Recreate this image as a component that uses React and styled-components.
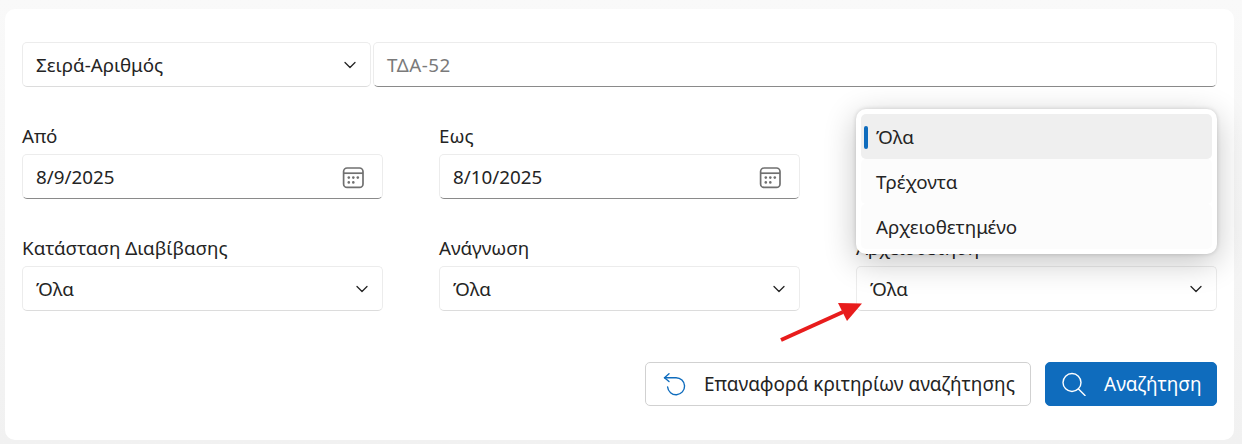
import React from "react";
import styled, { createGlobalStyle } from "styled-components";

const Global = createGlobalStyle`
  html, body { margin: 0; padding: 0; background: #f3f3f3; }
  body { font-family: "Noto Sans", "Open Sans", "Liberation Sans", sans-serif; color: #242424; }
  * { box-sizing: border-box; }
`;
const Page = styled.div`
  width: 1242px; height: 444px; padding: 9px 8px 4px 5px; overflow: hidden;
  background: linear-gradient(#f9f9f9, #f1f1f1);
`;
const Card = styled.div`
  position: relative; height: 431px; background: #fff; border-radius: 10px;
  padding: 33px 17px 0 17px;
`;
const TopRow = styled.div`display: flex; gap: 2px; height: 45px;`;
const Box = styled.div`
  display: flex; align-items: center; justify-content: space-between;
  width: ${p => p.$width || "auto"}; flex: ${p => p.$grow ? 1 : "none"};
  height: 45px; padding: 0 ${p => p.$right || "13px"} 0 13px; background: #fff; font-size: 18.8px;
  border: 1px solid #ececec; border-bottom: 1px solid ${p => p.$line || "#dcdcdc"}; border-radius: 5px;
`;
const Placeholder = styled.span`color: #7a7a7a; letter-spacing: .5px;`;
const Grid = styled.div`
  display: grid; grid-template-columns: repeat(3, 361px); column-gap: 56px; row-gap: 34px;
  margin-top: 34px;
`;
const Field = styled.div`display: flex; flex-direction: column; gap: 4px;`;
const Label = styled.label`font-size: 18.8px; line-height: 29px; height: 29px; margin-top: 1px; margin-bottom: -1px;`;
const Actions = styled.div`
  display: flex; justify-content: flex-end; gap: 14px; margin-top: 51px;
`;
const Button = styled.button`
  display: flex; align-items: center; height: 44px; font: inherit; font-size: 19px; border-radius: 5px;
  border: 1px solid ${p => p.$primary ? "#0f6cbd" : "#d1d1d1"};
  background: ${p => p.$primary ? "#0f6cbd" : "#fff"};
  color: ${p => p.$primary ? "#fff" : "#242424"};
  width: ${p => p.$width}; padding: 0 0 0 16px; gap: 18px;
`;
const Menu = styled.div`
  position: absolute; left: 851px; top: 100px; width: 361px; height: 145px; padding: 5px;
  background: #fff; border-radius: 10px;
  box-shadow: 0 8px 32px rgba(0,0,0,.24), 0 0 4px rgba(0,0,0,.16);
`;
const Option = styled.div`
  position: relative; height: 45px; padding-left: 15px; display: flex; align-items: center;
  font-size: 18.8px; border-radius: 5px; background: ${p => p.$active ? "#efefef" : "#fcfcfc"};
  ${p => p.$active && `&::before { content: ""; position: absolute; left: 3px; top: 12px; width: 4px; height: 23px; border-radius: 2px; background: #0f6cbd; }`}
`;
const Arrow = styled.svg`position: absolute; left: 770px; top: 285px;`;

const Chevron = () => (
  <svg width="16" height="16" viewBox="0 0 16 16" fill="none" stroke="#242424" strokeWidth="1.3" strokeLinecap="round" strokeLinejoin="round" style={{ marginRight: -1 }}>
    <path d="M3 5.5 8 10.5 13 5.5" />
  </svg>
);
const Calendar = () => (
  <svg width="24" height="24" viewBox="0 -1 24 24" fill="none" stroke="#707070" strokeWidth="1.7">
    <rect x="2.6" y="2" width="19.4" height="19.4" rx="3.5" />
    <path d="M3 7.2h19" />
    <g fill="#707070" stroke="none">
      <circle cx="7.8" cy="11.6" r="1.3" /><circle cx="12.3" cy="11.6" r="1.3" /><circle cx="16.8" cy="11.6" r="1.3" />
      <circle cx="7.8" cy="16.4" r="1.3" /><circle cx="12.3" cy="16.4" r="1.3" />
    </g>
  </svg>
);

const Select = ({ children, ...rest }) => <Box {...rest}><span>{children}</span><Chevron /></Box>;

export default function App() {
  return (
    <Page>
      <Global />
      <Card>
        <TopRow>
          <Select $width="349px">Σειρά-Αριθμός</Select>
          <Box $grow $line="#8a8a8a"><Placeholder>ΤΔΑ-52</Placeholder></Box>
        </TopRow>
        <Grid>
          <Field><Label>Από</Label><Box $line="#8a8a8a" $right="17px"><span>8/9/2025</span><Calendar /></Box></Field>
          <Field><Label>Εως</Label><Box $line="#8a8a8a" $right="17px"><span>8/10/2025</span><Calendar /></Box></Field>
          <Field />
          <Field><Label>Κατάσταση Διαβίβασης</Label><Select>Όλα</Select></Field>
          <Field><Label>Ανάγνωση</Label><Select>Όλα</Select></Field>
          <Field><Label>Αρχειοθέτηση</Label><Select>Όλα</Select></Field>
        </Grid>
        <Actions>
          <Button $width="386px">
            <svg width="24" height="24" viewBox="0 0 24 24" fill="none" stroke="#0f6cbd" strokeWidth="1.4" strokeLinecap="round" strokeLinejoin="round">
              <path d="M2.5 5.7H14A8.5 8.5 0 1 1 5.6 15" /><path d="M7 1.8 2.5 5.7 7 9.5" />
            </svg>
            Επαναφορά κριτηρίων αναζήτησης
          </Button>
          <Button $primary $width="172px">
            <svg width="24" height="24" viewBox="0 0 24 24" fill="none" stroke="#fff" strokeWidth="1.4" strokeLinecap="round">
              <circle cx="10" cy="10.5" r="9" /><path d="M16.5 17 23 23.5" />
            </svg>
            Αναζήτηση
          </Button>
        </Actions>
        <Menu>
          <Option $active>Όλα</Option>
          <Option>Τρέχοντα</Option>
          <Option>Αρχειοθετημένο</Option>
        </Menu>
        <Arrow width="90" height="55" viewBox="0 0 90 55">
          <path d="M6 46 L68 18" stroke="#e81c1c" strokeWidth="4" />
          <path d="M87 9.5 L63 9 L72 27 Z" fill="#e81c1c" />
        </Arrow>
      </Card>
    </Page>
  );
}
